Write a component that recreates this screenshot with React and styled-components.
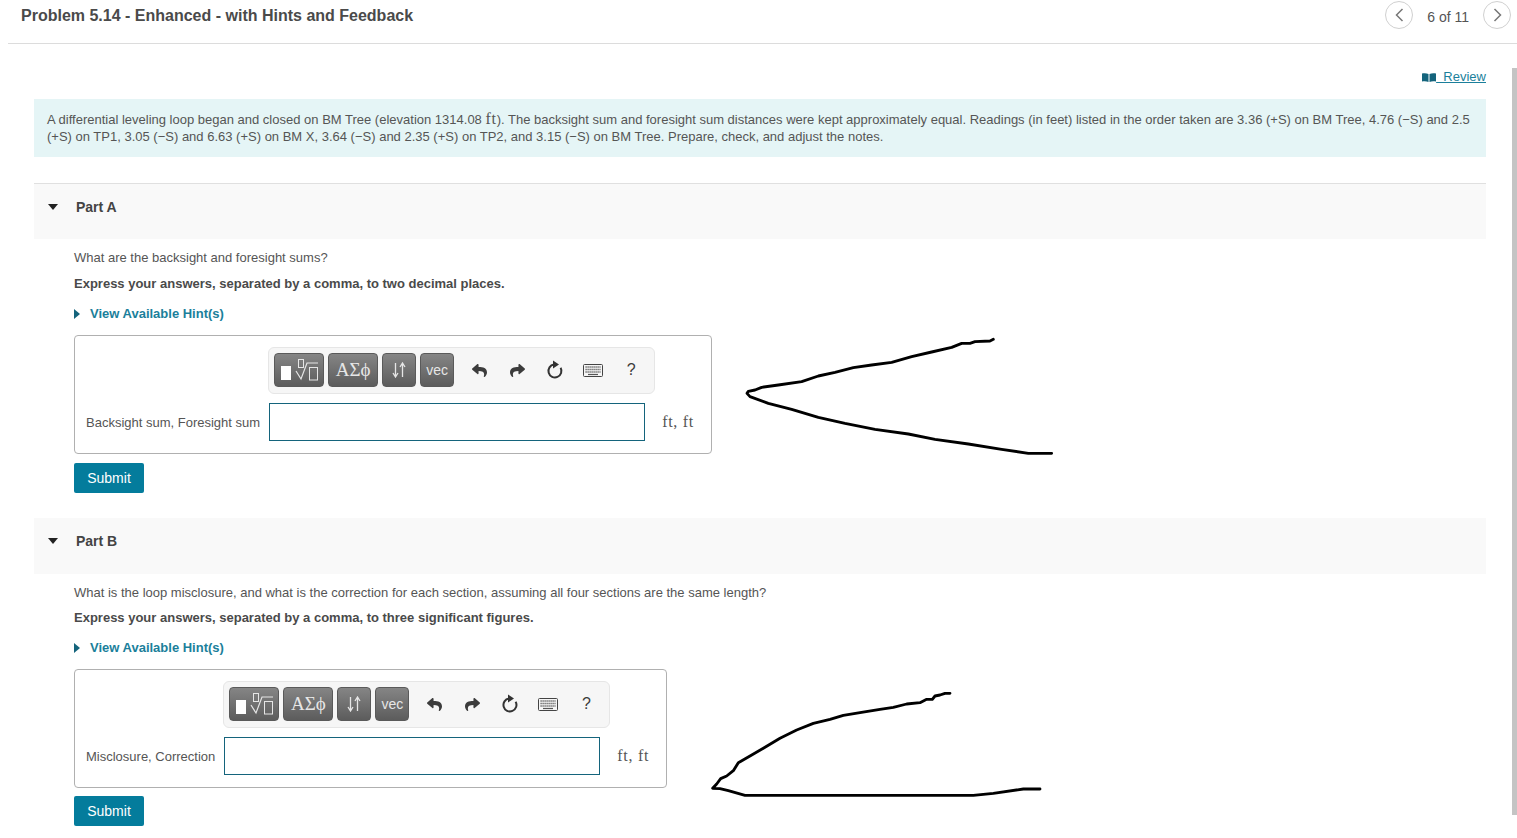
import React from 'react'
import styled, { createGlobalStyle } from 'styled-components'
import { FaReply, FaShare } from 'react-icons/fa'

const GlobalStyle = createGlobalStyle`
  html, body {
    margin: 0;
    padding: 0;
    height: 100%;
    overflow: hidden;
    background: #fff;
    font-family: 'Liberation Sans', Arial, sans-serif;
    color: #555;
  }
`

const Page = styled.div`
  position: relative;
  width: 1517px;
  height: 838px;
  overflow: hidden;
`

const ScrollThumb = styled.div`
  position: absolute;
  top: 68px;
  right: 0;
  width: 5px;
  height: 747px;
  background: #c4c4c4;
`

const Header = styled.header`
  height: 43px;
  margin-left: 8px;
  padding: 0 6px 0 13px;
  border-bottom: 1px solid #dcdcdc;
  display: flex;
  align-items: flex-start;
  justify-content: space-between;
`

const Title = styled.h1`
  margin: 6px 0 0;
  font-size: 16px;
  line-height: 19px;
  font-weight: bold;
  color: #4a4a4a;
`

const Pager = styled.nav`
  display: flex;
  align-items: center;
  gap: 14px;
  margin-top: 1px;
  font-size: 14px;
  color: #555;
`

const PageCount = styled.span`
  margin-top: 3px;
`

const RoundButton = styled.span`
  width: 26px;
  height: 26px;
  border: 1px solid #d0d0d0;
  border-radius: 50%;
  display: flex;
  align-items: center;
  justify-content: center;
`

const Main = styled.main`
  width: 1452px;
  margin-left: 34px;
`

const ReviewRow = styled.div`
  display: flex;
  justify-content: flex-end;
  align-items: flex-start;
  height: 55px;
  padding-top: 25px;
  box-sizing: border-box;
  font-size: 13px;
  line-height: 16px;
`

const ReviewLink = styled.a`
  color: #1b7f9b;
  text-decoration: underline;
  white-space: pre;
  display: flex;
  align-items: center;
`

const Intro = styled.p`
  margin: 0 0 26px;
  padding: 12px 13px 13px;
  height: 33px;
  box-sizing: content-box;
  background: #e5f5f6;
  font-size: 13px;
  line-height: 17px;
  color: #555;
`

const MathUnit = styled.span`
  font-family: 'Liberation Serif', serif;
  font-size: 16px;
  line-height: 0;
  letter-spacing: 0.7px;
`

const PartHeader = styled.div`
  height: 56px;
  box-sizing: border-box;
  display: flex;
  align-items: center;
  gap: 18px;
  padding: 0 0 ${(p) => (p.$ruled ? 9 : 10)}px 14px;
  background: #f9f9f9;
  border-top: ${(p) => (p.$ruled ? '1px solid #e0e0e0' : 'none')};
  margin-top: ${(p) => p.$top || 0}px;
  font-size: 14px;
  font-weight: bold;
  color: #444;
`

const Caret = styled.span`
  width: 0;
  height: 0;
  border-left: 5.5px solid transparent;
  border-right: 5.5px solid transparent;
  border-top: 6px solid #222;
`

const PartBody = styled.section`
  padding: 10px 0 0 40px;
`

const Question = styled.p`
  margin: 0;
  font-size: 13px;
  line-height: 17px;
  color: #555;
`

const Instruction = styled.p`
  margin: ${(p) => p.$gap}px 0 0;
  font-size: 13px;
  line-height: 17px;
  font-weight: bold;
  color: #4a4a4a;
`

const Hint = styled.div`
  margin-top: 13px;
  display: flex;
  align-items: center;
  gap: 10px;
  font-size: 13px;
  line-height: 17px;
  font-weight: bold;
  color: #1b7f9b;
`

const HintCaret = styled.span`
  width: 0;
  height: 0;
  border-top: 5.5px solid transparent;
  border-bottom: 5.5px solid transparent;
  border-left: 6px solid #14647c;
`

const AnswerRow = styled.div`
  position: relative;
  margin-top: 13px;
`

const AnswerBox = styled.div`
  width: ${(p) => p.$width}px;
  height: 119px;
  box-sizing: border-box;
  border: 1px solid #b0b0b0;
  border-radius: 4px;
  padding: 11px 0 0 11px;
  display: grid;
  grid-template-columns: auto 376px auto;
  grid-template-rows: 47px 38px;
  row-gap: 9px;
  column-gap: 9px;
  justify-content: start;
  align-items: center;
`

const Toolbar = styled.div`
  grid-column: 2 / 4;
  width: 387px;
  height: 47px;
  box-sizing: border-box;
  margin-left: -1px;
  padding: 5px 0 0 5px;
  display: flex;
  align-items: flex-start;
  gap: 4px;
  background: #f6f6f6;
  border: 1px solid #e6e6e6;
  border-radius: 6px;
`

const MathButton = styled.span`
  width: ${(p) => p.$width}px;
  height: 34px;
  box-sizing: border-box;
  border-radius: 4px;
  border: 1px solid #5a5a5a;
  background: linear-gradient(#858585, #5c5c5c);
  color: #e6e6e6;
  display: flex;
  align-items: center;
  justify-content: center;
  font-family: ${(p) => (p.$serif ? "'Liberation Serif', serif" : "'Liberation Sans', sans-serif")};
  font-size: ${(p) => p.$size || 14}px;
`

const ToolIcons = styled.div`
  display: flex;
  align-items: center;
  margin-left: 2px;
  height: 34px;
`

const ToolIcon = styled.span`
  width: 38px;
  height: 36px;
  display: flex;
  align-items: center;
  justify-content: center;
  color: #3c3c3c;
  font-size: ${(p) => (p.$help ? 16 : 15)}px;
`

const FieldLabel = styled.label`
  font-size: 13px;
  color: #555;
  white-space: nowrap;
`

const Field = styled.div`
  width: 376px;
  height: 38px;
  box-sizing: border-box;
  border: 1px solid #14647c;
  background: #fff;
`

const Units = styled.span`
  padding-left: 8px;
  color: #555;
`

const Submit = styled.button`
  display: block;
  width: 70px;
  height: 30px;
  margin-top: ${(p) => p.$top}px;
  padding: 0;
  border: none;
  border-radius: 2px;
  background: #047c9c;
  color: #fff;
  font-family: 'Liberation Sans', sans-serif;
  font-size: 14px;
`

const Sketch = styled.svg`
  position: absolute;
  left: ${(p) => p.$left}px;
  top: ${(p) => p.$top}px;
  overflow: visible;
  pointer-events: none;
`

const BookIcon = () => (
  <svg width="14" height="9" viewBox="0 0 14 9" fill="#14647c">
    <path d="M0 0.5 C2 0 4.500 0 6.500 1 V9 C4.500 8 2 8 0 8.500 Z" />
    <path d="M14 0.5 C12 0 9.500 0 7.500 1 V9 C9.500 8 12 8 14 8.500 Z" />
  </svg>
)

const Chevron = ({ flip }) => (
  <svg width="9" height="14" viewBox="0 0 9 14" fill="none" stroke="#777" strokeWidth="1.500">
    <path d={flip ? 'M1.500 1 L7.500 7 L1.500 13' : 'M7.500 1 L1.500 7 L7.500 13'} />
  </svg>
)

const TemplateIcon = () => (
  <svg width="42" height="26" viewBox="0 0 42 26" fill="none">
    <rect x="3" y="9" width="10" height="14" fill="#fff" />
    <rect x="20.500" y="2.500" width="5" height="8" stroke="#e6e6e6" />
    <path d="M18 14 L23 22 L29 6 H40" stroke="#e6e6e6" strokeWidth="1.200" />
    <rect x="31.500" y="10.500" width="8" height="12.500" stroke="#e6e6e6" />
  </svg>
)

const SwapIcon = () => (
  <svg width="14" height="16" viewBox="0 0 14 16" fill="none" stroke="#e6e6e6" strokeWidth="1.300">
    <path d="M3.500 1 V14 M1 11 L3.500 15 L6 11" />
    <path d="M10.500 15 V2 M8 5 L10.500 1 L13 5" />
  </svg>
)

const ResetIcon = () => (
  <svg width="18" height="20" viewBox="0 0 18 20" fill="none">
    <path d="M14.600 7.700 A6.500 6.500 0 1 1 8 4.500" stroke="#333" strokeWidth="2" />
    <path d="M7 0.500 L13 4.500 L7 8.500 Z" fill="#333" />
  </svg>
)

const KeyboardIcon = () => (
  <svg width="20" height="13" viewBox="0 0 20 13" fill="none">
    <rect x="0.500" y="0.500" width="19" height="12" rx="1" stroke="#444" />
    <path
      d="M2.500 3 H17.500 M2.500 5.500 H17.500 M2.500 8 H17.500"
      stroke="#555"
      strokeWidth="1.500"
      strokeDasharray="1.200 0.800"
    />
    <path d="M5 10.500 H15" stroke="#555" strokeWidth="1.200" />
  </svg>
)

const MathToolbar = () => (
  <Toolbar>
    <MathButton $width={50}>
      <TemplateIcon />
    </MathButton>
    <MathButton $width={50} $serif $size={19}>
      ΑΣϕ
    </MathButton>
    <MathButton $width={34}>
      <SwapIcon />
    </MathButton>
    <MathButton $width={34}>vec</MathButton>
    <ToolIcons>
      <ToolIcon>
        <FaReply />
      </ToolIcon>
      <ToolIcon>
        <FaShare />
      </ToolIcon>
      <ToolIcon>
        <ResetIcon />
      </ToolIcon>
      <ToolIcon>
        <KeyboardIcon />
      </ToolIcon>
      <ToolIcon $help>?</ToolIcon>
    </ToolIcons>
  </Toolbar>
)

const AnswerForm = ({ label, width }) => (
  <AnswerBox $width={width}>
    <span />
    <MathToolbar />
    <FieldLabel>{label}</FieldLabel>
    <Field />
    <Units>
      <MathUnit>ft, ft</MathUnit>
    </Units>
  </AnswerBox>
)

const sketchA =
  'M775 28 L765 33 L720 35 L705 40 L680 40 L650 52 L590 66 L530 80 L470 97 L410 105 L355 113 L300 127 L250 138 L200 155 L130 165 L80 172 L60 180 L40 184 L36 190 L45 200 L100 220 L170 238 L250 262 L330 280 L420 298 L520 312 L600 328 L700 342 L800 358 L880 370 L950 370'

const sketchB =
  'M750 40 L735 40 L720 45 L705 48 L697 58 L680 58 L660 68 L620 72 L580 82 L540 88 L480 98 L430 106 L390 118 L340 130 L290 150 L240 175 L190 205 L150 228 L115 248 L100 272 L80 288 L62 296 L50 312 L38 325 L60 326 L85 332 L135 346 L820 346 L880 340 L970 327 L1020 327'

export default function App() {
  return (
    <Page>
      <GlobalStyle />
      <ScrollThumb />
      <Header>
        <Title>Problem 5.14 - Enhanced - with Hints and Feedback</Title>
        <Pager>
          <RoundButton>
            <Chevron />
          </RoundButton>
          <PageCount>6 of 11</PageCount>
          <RoundButton>
            <Chevron flip />
          </RoundButton>
        </Pager>
      </Header>
      <Main>
        <ReviewRow>
          <ReviewLink>
            <BookIcon />  Review
          </ReviewLink>
        </ReviewRow>
        <Intro>
          A differential leveling loop began and closed on BM Tree (elevation 1314.08 <MathUnit>ft</MathUnit>). The backsight sum
          and foresight sum distances were kept approximately equal. Readings (in feet) listed in the order taken are 3.36 (+S) on
          BM Tree, 4.76 (−S) and 2.5 (+S) on TP1, 3.05 (−S) and 6.63 (+S) on BM X, 3.64 (−S) and 2.35 (+S) on TP2, and 3.15 (−S)
          on BM Tree. Prepare, check, and adjust the notes.
        </Intro>

        <PartHeader $ruled>
          <Caret />
          Part A
        </PartHeader>
        <PartBody>
          <Question>What are the backsight and foresight sums?</Question>
          <Instruction $gap={9}>Express your answers, separated by a comma, to two decimal places.</Instruction>
          <Hint>
            <HintCaret />
            View Available Hint(s)
          </Hint>
          <AnswerRow>
            <AnswerForm label="Backsight sum, Foresight sum" width={638} />
            <Sketch $left={661} $top={-5} width="330" height="130" viewBox="0 0 990 390" fill="none">
              <path d={sketchA} stroke="#000" strokeWidth="8.500" strokeLinejoin="round" strokeLinecap="round" />
            </Sketch>
          </AnswerRow>
          <Submit $top={9}>Submit</Submit>
        </PartBody>

        <PartHeader $top={25}>
          <Caret />
          Part B
        </PartHeader>
        <PartBody>
          <Question>
            What is the loop misclosure, and what is the correction for each section, assuming all four sections are the same
            length?
          </Question>
          <Instruction $gap={8}>Express your answers, separated by a comma, to three significant figures.</Instruction>
          <Hint>
            <HintCaret />
            View Available Hint(s)
          </Hint>
          <AnswerRow>
            <AnswerForm label="Misclosure, Correction" width={593} />
            <Sketch $left={626} $top={11} width="350" height="125" viewBox="0 0 1050 375" fill="none">
              <path d={sketchB} stroke="#000" strokeWidth="8.500" strokeLinejoin="round" strokeLinecap="round" />
            </Sketch>
          </AnswerRow>
          <Submit $top={8}>Submit</Submit>
        </PartBody>
      </Main>
    </Page>
  )
}
